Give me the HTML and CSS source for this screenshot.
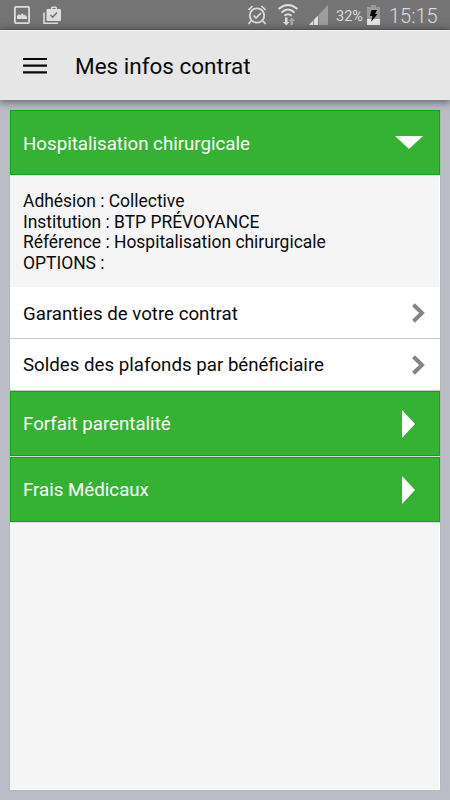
FILE: index.html
```html
<!DOCTYPE html>
<html lang="fr">
<head>
<meta charset="utf-8">
<title>Mes infos contrat</title>
<link rel="stylesheet" href="styles.css">
</head>
<body>
<div class="status">
  <svg class="status-left" width="66" height="29" viewBox="0 0 66 29">
    <rect x="14.9" y="6.900" width="14.200" height="16.200" rx="1" fill="none" stroke="#dedede" stroke-width="1.800"/>
    <path d="M17 19v-3l2-2 1.500 1.500L22 13l2 2.500 1-1 2 2.500v2z" fill="#dedede"/>
    <path d="M44 12.500v10.700h14" fill="none" stroke="#dedede" stroke-width="1.600"/>
    <path d="M47.500 9H51V8q0-1.500 1.500-1.500h3Q57 6.500 57 8v1h3q1 0 1 1v10q0 1-1 1H47.500q-1 0-1-1V10q0-1 1-1zm5 0h3V8h-3z" fill="#dedede" fill-rule="evenodd"/>
    <path d="M50.500 15l2.200 2.200 4.300-4.700" fill="none" stroke="#747474" stroke-width="1.600"/>
  </svg>
  <svg class="status-right" width="84" height="29" viewBox="245 0 84 29">
    <g fill="none" stroke="#dedede" stroke-width="1.800">
      <circle cx="257" cy="15.500" r="7.200"/>
      <path d="M248.500 10l4-4M265.500 10l-4-4M251 21l-2.500 3M263 21l2.500 3M253.500 15.500l2.500 2.500 5-5" stroke-width="1.700"/>
      <path d="M278.500 9q9.500-8 19 0M281.500 12.500q6.500-6 13 0M284.500 15.800q3.500-3.200 7 0" stroke-width="2"/>
    </g>
    <path d="M285 17.500h2.500V22h2l-3.200 3.500L283 22h2z" fill="#dedede"/>
    <path d="M290.500 25V21h-2l3.200-3.500L295 21h-2v4z" fill="#a8a8a8"/>
    <path d="M309 25L328 5v20z" fill="#9e9e9e"/>
    <path d="M309 25l9-9.500V25z" fill="#e4e4e4"/>
    <path d="M313.500 20v5M318.500 15v10" stroke="#747474" stroke-width=".7"/>
  </svg>
  <span class="percent">32%</span>
  <svg class="battery" width="13" height="20" viewBox="0 0 13 20">
    <path d="M4 0h5v2h4v18H0V2h4z" fill="#999"/>
    <path d="M0 14h13v6H0z" fill="#e6e6e6"/>
    <path d="M4.500 5H10L8 9h2.500L4 17l1.500-6H3z" fill="#050505"/>
  </svg>
  <span class="clock">15:15</span>
</div>
<header class="header">
  <svg class="menu" width="24" height="18" viewBox="0 0 24 18">
    <path d="M0 2h24M0 8.700h24M0 15.300h24" stroke="#080808" stroke-width="2.200"/>
  </svg>
  <h1 class="title">Mes infos contrat</h1>
</header>
<main class="card">
  <div class="section"><span class="label">Hospitalisation chirurgicale</span>
    <svg class="down" width="28" height="13" viewBox="0 0 28 13"><path d="M0 0h28L14 13z" fill="#fff"/></svg>
  </div>
  <div class="info">
    <p>Adhésion : Collective</p>
    <p>Institution : BTP PRÉVOYANCE</p>
    <p>Référence : Hospitalisation chirurgicale</p>
    <p>OPTIONS :</p>
  </div>
  <div class="row"><span class="label">Garanties de votre contrat</span>
    <svg class="chevron" width="13" height="20" viewBox="0 0 13 20"><path d="M1.500 1.700L10 10l-8.500 8.300" fill="none" stroke="#858585" stroke-width="4"/></svg>
  </div>
  <div class="row last"><span class="label">Soldes des plafonds par bénéficiaire</span>
    <svg class="chevron" width="13" height="20" viewBox="0 0 13 20"><path d="M1.500 1.700L10 10l-8.500 8.300" fill="none" stroke="#858585" stroke-width="4"/></svg>
  </div>
  <div class="section closed"><span class="label">Forfait parentalité</span>
    <svg class="right" width="13" height="28" viewBox="0 0 13 28"><path d="M0 0v28l13-14z" fill="#fff"/></svg>
  </div>
  <div class="section closed"><span class="label">Frais Médicaux</span>
    <svg class="right" width="13" height="28" viewBox="0 0 13 28"><path d="M0 0v28l13-14z" fill="#fff"/></svg>
  </div>
</main>
</body>
</html>
```
FILE: styles.css
```css
* { box-sizing: border-box; }
body {
  margin: 0;
  width: 450px;
  height: 800px;
  overflow: hidden;
  display: flex;
  flex-direction: column;
  background: #babdc6;
  font-family: Roboto, "Liberation Sans", sans-serif;
  color: #0a0a0a;
}
.status {
  height: 30px;
  flex: none;
  display: flex;
  align-items: flex-start;
  background: #747474;
  border-bottom: 1px solid #686868;
  color: #dcdcdc;
}
.status-right { margin-left: 179px; }
.percent { width: 32px; margin-left: 7px; font-size: 14.5px; line-height: 34px; white-space: nowrap; }
.battery { margin: 5px 0 0 -1px; }
.clock { margin-left: 9px; font-size: 20px; line-height: 32px; font-weight: 300; white-space: nowrap; }
.header {
  height: 70px;
  flex: none;
  display: flex;
  align-items: center;
  padding: 2px 23px 0;
  background: #e6e6e6;
  border-top: 1px solid #f0f0f0;
  box-shadow: 0 1px 8px 1px rgba(30, 30, 40, .6);
}
.menu { margin-top: -2px; }
.title { margin: -2px 0 0 28px; font-size: 22.5px; font-weight: 400; line-height: 30px; }
.card {
  flex: 1;
  margin: 10px;
  background: #f5f5f5;
  box-shadow: inset -1px -1px #fff, 0 0 1px #9b9da6;
}
.section, .row {
  display: flex;
  align-items: center;
  justify-content: space-between;
  padding-left: 13px;
}
.section { height: 65px; background: #35b234; border: 1px solid #08aa0b; padding-left: 12px; color: #fff; }
.closed { margin-bottom: 1px; box-shadow: 0 1px #dcdce0; }
.label { font-size: 18.7px; line-height: 24px; white-space: nowrap; padding-top: 2px; }
.closed .label, .last .label { padding-top: 0; }
.down { margin-right: 16px; }
.right { margin-right: 24px; }
.info { height: 112px; padding: 16px 13px 0; font-size: 17.45px; line-height: 20.5px; }
.info p { margin: 0; white-space: nowrap; }
.row { height: 52px; background: #fff; border-bottom: 1px solid #cbcbcf; padding-right: 15px; }
```
